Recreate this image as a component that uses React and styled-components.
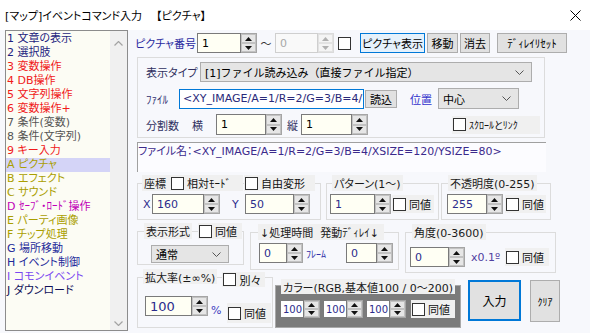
import React from 'react';
import styled, { createGlobalStyle } from 'styled-components';

const FONT = `"DejaVu Sans", "Noto Sans CJK JP", sans-serif`;

const Global = createGlobalStyle`
  html, body { margin: 0; padding: 0; background: #f7f8fc; }
  body { font-family: ${FONT}; font-size: 11px; font-feature-settings: "palt"; color: #111; }
  * { box-sizing: border-box; }
`;

const Root = styled.div`
  width: 590px; height: 333px; display: flex; flex-direction: column;
  background: #f7f8fc; overflow: hidden;
`;
const TitleBar = styled.div`
  height: 30px; flex: none; display: flex; align-items: center; justify-content: space-between;
  padding: 0 9px 0 5px; background: #ffffff; color: #000; font-size: 11px; white-space: pre;
`;
const Main = styled.div`display: flex; flex: 1; padding-left: 5px;`;

const ListBox = styled.div`
  width: 123px; height: 301px; flex: none; border: 1px solid #8c8c8c; background: #fcfcf4; display: flex;
`;
const ListItems = styled.div`flex: 1; padding-top: 1px;`;
const ListItem = styled.div`
  height: 14px; line-height: 14px; padding-left: 1px; white-space: nowrap; font-size: 11px;
  color: ${p => p.$color}; background: ${p => (p.$sel ? '#d4d4f7' : 'transparent')};
`;
const ScrollBar = styled.div`
  width: 17px; background: #f0f0f0; display: flex; flex-direction: column; justify-content: space-between;
  align-items: center; padding: 10px 0 4px;
`;

const Right = styled.div`margin-left: 7px; display: flex; flex-direction: column; width: 455px;`;

const Row = styled.div`
  display: flex; align-items: ${p => p.$align || 'center'}; flex: none;
  height: ${p => (p.$h ? p.$h + 'px' : 'auto')};
  margin-top: ${p => p.$mt || 0}px; margin-left: ${p => p.$ml || 0}px;
  padding-left: ${p => p.$pl || 0}px;
`;

const Label = styled.span`
  display: flex; align-items: center; flex: none; white-space: nowrap;
  width: ${p => (p.$w ? p.$w + 'px' : 'auto')}; height: ${p => p.$h || 20}px;
  margin-left: ${p => p.$ml || 0}px; margin-top: ${p => p.$mt || 0}px;
  justify-content: ${p => (p.$center ? 'center' : 'flex-start')};
  color: ${p => p.$color || '#1a1a1a'}; font-size: ${p => p.$fs || 11}px;
`;

const SpinWrap = styled.div`
  display: flex; flex: none; height: ${p => p.$h}px; margin-left: ${p => p.$ml || 0}px;
`;
const Edit = styled.div`
  width: ${p => p.$w}px; height: 100%; display: flex; align-items: center; padding-left: ${p => p.$pad}px;
  border: 1px solid ${p => (p.$dis ? '#cfcfcf' : '#7a7a7a')};
  background: ${p => p.$bg}; color: ${p => p.$color}; font-size: ${p => p.$fs}px; white-space: nowrap;
`;
const SpinBtns = styled.div`
  width: 16px; height: 100%; display: flex; flex-direction: column; border: 1px solid ${p => (p.$dis ? '#dadada' : '#a5a5a5')};
  border-left: none; background: #f0f0f0;
`;
const SpinHalf = styled.div`
  flex: 1; display: flex; align-items: center; justify-content: center;
  border: 1px solid ${p => (p.$dis ? '#e2e2e2' : '#c2c2c2')}; background: ${p => (p.$dis ? '#f4f4f4' : '#e6e6e6')};
`;

const Tri = ({ up, dis }) => (
  <svg width="7" height="4" viewBox="0 0 7 4">
    <polygon points={up ? '0,4 3.5,0 7,4' : '0,0 7,0 3.5,4'} fill={dis ? '#b0b0b0' : '#111'} />
  </svg>
);

const Spin = ({ w, h = 20, value, color = '#2c2c8c', bg = '#fffff4', fs = 11, pad = 4, disabled, ml }) => (
  <SpinWrap $h={h} $ml={ml}>
    <Edit $w={w} $pad={pad} $bg={disabled ? '#f9f9f9' : bg} $color={disabled ? '#a8a8a8' : color} $fs={fs} $dis={disabled}>
      {value}
    </Edit>
    <SpinBtns $dis={disabled}>
      <SpinHalf $dis={disabled}><Tri up dis={disabled} /></SpinHalf>
      <SpinHalf $dis={disabled}><Tri dis={disabled} /></SpinHalf>
    </SpinBtns>
  </SpinWrap>
);

const Button = styled.div`
  display: flex; align-items: center; justify-content: center; flex: none; white-space: nowrap;
  width: ${p => p.$w}px; height: ${p => p.$h || 20}px;
  margin-left: ${p => p.$ml || 0}px; margin-top: ${p => p.$mt || 0}px;
  border: ${p => (p.$thick ? 2 : 1)}px solid ${p => (p.$blue ? '#0078d7' : '#adadad')};
  background: ${p => (p.$light ? '#e5f1fb' : '#e1e1e1')};
  color: #000; font-size: ${p => p.$fs || 11}px;
`;

const Box = styled.span`
  width: 13px; height: 13px; flex: none; border: 1px solid #333; background: #fff;
  margin-left: ${p => p.$ml || 0}px;
`;
const CheckItem = styled.div`
  display: flex; align-items: center; gap: 3px; flex: none; white-space: nowrap;
  width: ${p => p.$w}px; height: ${p => p.$h || 18}px; padding-left: 1px;
  margin-left: ${p => p.$ml || 0}px; margin-top: ${p => p.$mt || 0}px;
  background: #f0f0f0; color: #111; font-size: ${p => p.$fs || 11}px;
`;
const Check = ({ children, ...rest }) => (
  <CheckItem {...rest}><Box />{children}</CheckItem>
);

const SelectBox = styled.div`
  display: flex; align-items: center; justify-content: space-between; flex: none;
  width: ${p => p.$w}px; height: ${p => p.$h || 20}px; margin-left: ${p => p.$ml || 0}px;
  border: 1px solid #adadad; background: #e5e5e5; padding: 0 7px 0 4px; color: #000; white-space: nowrap;
  font-feature-settings: normal;
`;
const Chevron = () => (
  <svg width="9" height="5" viewBox="0 0 9 5">
    <polyline points="0.5,0.5 4.5,4.5 8.5,0.5" fill="none" stroke="#555" strokeWidth="1" />
  </svg>
);
const Select = ({ children, ...rest }) => (
  <SelectBox {...rest}><span>{children}</span><Chevron /></SelectBox>
);

const DisplayGroup = styled.div`
  width: 408px; height: 81px; margin: 4px 0 0 2px; flex: none;
  border: 1px solid #dcdcdc; padding: 4px 0 0 8px;
`;
const FileInput = styled.div`
  width: 185px; height: 20px; flex: none; border: 1px solid #0078d7; background: #fff;
  display: flex; align-items: center; padding-left: 3px; white-space: nowrap; color: #2a2a7a;
`;
const FileNameBox = styled.div`
  width: 409px; height: 30px; margin: 4px 0 0 2px; flex: none;
  border-top: 1px solid #a0a0a0; border-left: 1px solid #a0a0a0;
  background: #fcfcff; color: #3b2a8c; padding: 1px 0 0 0; white-space: nowrap; line-height: 16px;
`;

const Group = styled.div`
  display: flex; flex-direction: column; flex: none;
  width: ${p => p.$w}px; height: ${p => p.$h}px;
  margin-left: ${p => p.$ml || 0}px; margin-top: ${p => p.$mt || 0}px;
  border: 1px solid ${p => p.$dark ? '#a9a9a9' : '#dcdcdc'};
  background: ${p => (p.$dark ? '#7b7b7b' : 'transparent')};
`;
const GroupHead = styled.div`
  display: flex; align-items: flex-start; height: ${p => p.$h || 16}px; flex: none;
  margin-top: ${p => p.$mt ?? -9}px; margin-left: ${p => p.$ml || 0}px;
`;
const HeadLabel = styled.div`
  display: flex; align-items: center; flex: none; white-space: nowrap;
  height: ${p => p.$h || 16}px; width: ${p => (p.$w ? p.$w + 'px' : 'auto')};
  padding: 0 2px; background: #f0f0f0; color: #1a1a1a; font-size: 11px;
`;

const TitleText = styled.span`color: #000;`;
const CloseIcon = () => (
  <svg width="11" height="11" viewBox="0 0 11 11">
    <path d="M0.5 0.5 L10.5 10.5 M10.5 0.5 L0.5 10.5" stroke="#000" strokeWidth="1" />
  </svg>
);
const ScrollArrow = ({ up }) => (
  <svg width="9" height="5" viewBox="0 0 9 5">
    <polyline points={up ? '0.5,4.5 4.5,0.5 8.5,4.5' : '0.5,0.5 4.5,4.5 8.5,0.5'} fill="none" stroke="#a3a3a3" strokeWidth="1.2" />
  </svg>
);

const LIST = [
  ['1 文章の表示', '#1e1e80'],
  ['2 選択肢', '#1e1e80'],
  ['3 変数操作', '#f01a1a'],
  ['4 DB操作', '#f01a1a'],
  ['5 文字列操作', '#f01a1a'],
  ['6 変数操作+', '#f01a1a'],
  ['7 条件(変数)', '#555555'],
  ['8 条件(文字列)', '#555555'],
  ['9 キー入力', '#f01a1a'],
  ['A ピクチャ', '#aa9e00', true],
  ['B エフェクト', '#aa9e00'],
  ['C サウンド', '#aa9e00'],
  ['D ｾｰﾌﾞ・ﾛｰﾄﾞ操作', '#c000b8'],
  ['E パーティ画像', '#aa9e00'],
  ['F チップ処理', '#aa9e00'],
  ['G 場所移動', '#1e2a9a'],
  ['H イベント制御', '#1e2a9a'],
  ['I コモンイベント', '#7a48f0'],
  ['J ダウンロード', '#101058'],
];

const NAVY = '#2c2c8c';

export default function App() {
  return (
    <Root>
      <Global />
      <TitleBar>
        <TitleText>[マップ]イベントコマンド入力    【ピクチャ】</TitleText>
        <CloseIcon />
      </TitleBar>
      <Main>
        <ListBox>
          <ListItems>
            {LIST.map(([t, c, s]) => (
              <ListItem key={t} $color={c} $sel={s}>{t}</ListItem>
            ))}
          </ListItems>
          <ScrollBar>
            <ScrollArrow up />
            <ScrollArrow />
          </ScrollBar>
        </ListBox>

        <Right>
          <Row $h={20} $mt={3}>
            <Label $w={62} $color="#2a2aa0">ピクチャ番号</Label>
            <Spin w={44} value="1" color="#000" />
            <Label $w={18} $center $color="#333">～</Label>
            <Spin w={43} value="0" disabled />
            <Box $ml={4} />
            <Button $w={65} $ml={9} $blue $light>ピクチャ表示</Button>
            <Button $w={31} $ml={2}>移動</Button>
            <Button $w={30} $ml={2}>消去</Button>
            <Button $w={70} $ml={7}>ﾃﾞｨﾚｲﾘｾｯﾄ</Button>
          </Row>

          <DisplayGroup>
            <Row $h={20}>
              <Label $w={54} $color="#303060">表示タイプ</Label>
              <Select $w={332}>[1]ファイル読み込み（直接ファイル指定）</Select>
            </Row>
            <Row $h={21} $mt={6}>
              <Label $w={33} $color="#303070">ﾌｧｲﾙ</Label>
              <FileInput>&lt;XY_IMAGE/A=1/R=2/G=3/B=4/</FileInput>
              <Button $w={32} $h={18} $ml={1}>読込</Button>
              <Label $w={28} $ml={13} $color="#3333cc">位置</Label>
              <Select $w={81} $h={21}>中心</Select>
            </Row>
            <Row $h={21} $mt={5}>
              <Label $w={46} $color="#303060">分割数</Label>
              <Label $w={24} $color="#303060">横</Label>
              <Spin w={50} h={21} value="1" color="#000" />
              <Label $w={14} $ml={5} $color="#303060">縦</Label>
              <Spin w={51} h={21} value="1" color="#000" />
              <Check $w={88} $ml={84} $fs={10}>ｽｸﾛｰﾙとﾘﾝｸ</Check>
            </Row>
          </DisplayGroup>

          <FileNameBox>ファイル名：&lt;XY_IMAGE/A=1/R=2/G=3/B=4/XSIZE=120/YSIZE=80&gt;</FileNameBox>

          <Row $align="flex-start" $mt={11} $ml={2}>
            <Group $w={184} $h={37}>
              <GroupHead $ml={4}>
                <HeadLabel $w={28}>座標</HeadLabel>
                <Check $w={73} $h={16}>相対ﾓｰﾄﾞ</Check>
                <Check $w={71} $h={16} $ml={1}>自由変形</Check>
              </GroupHead>
              <Row $h={20} $mt={3} $pl={5}>
                <Label $w={9} $color={NAVY}>X</Label>
                <Spin w={52} value="160" />
                <Label $w={13} $ml={12} $color={NAVY}>Y</Label>
                <Spin w={49} value="50" />
              </Row>
            </Group>
            <Group $w={113} $h={37} $ml={5}>
              <GroupHead $ml={5}>
                <HeadLabel>パターン(1～)</HeadLabel>
              </GroupHead>
              <Row $h={20} $mt={3} $pl={3}>
                <Spin w={45} value="1" />
                <Check $w={42} $ml={1}>同値</Check>
              </Row>
            </Group>
            <Group $w={110} $h={37} $ml={2}>
              <GroupHead $ml={6}>
                <HeadLabel>不透明度(0-255)</HeadLabel>
              </GroupHead>
              <Row $h={20} $mt={3} $pl={5}>
                <Spin w={40} value="255" />
                <Check $w={41} $ml={2}>同値</Check>
              </Row>
            </Group>
          </Row>

          <Row $align="flex-start" $mt={11} $ml={2}>
            <Group $w={107} $h={34}>
              <GroupHead $ml={6}>
                <HeadLabel $w={48}>表示形式</HeadLabel>
                <Check $w={44} $h={16} $ml={6}>同値</Check>
              </GroupHead>
              <Row $h={18} $mt={6} $pl={13}>
                <Select $w={78} $h={18}>通常</Select>
              </Row>
            </Group>
            <Group $w={149} $h={38} $ml={6} $mt={1}>
              <GroupHead $ml={7}>
                <HeadLabel $w={126}>↓処理時間&nbsp;&nbsp;発動ﾃﾞｨﾚｲ↓</HeadLabel>
              </GroupHead>
              <Row $h={20} $mt={3} $pl={8}>
                <Spin w={28} value="0" />
                <Label $w={40} $ml={3} $color="#3030a8" $fs={10}>ﾌﾚｰﾑ</Label>
                <Spin w={31} value="0" />
              </Row>
            </Group>
            <Group $w={151} $h={41} $ml={6} $mt={1}>
              <GroupHead $ml={6}>
                <HeadLabel>角度(0-3600)</HeadLabel>
              </GroupHead>
              <Row $h={20} $mt={7} $pl={4}>
                <Spin w={39} value="0" />
                <Label $w={34} $ml={6} $color="#5040a0">x0.1º</Label>
                <Check $w={44}>同値</Check>
              </Row>
            </Group>
          </Row>

          <Row $align="flex-start" $mt={4}>
            <Group $w={136} $h={51} $ml={2}>
              <GroupHead $ml={5}>
                <HeadLabel $h={15}>拡大率(±∞%)</HeadLabel>
                <Check $w={43} $h={15} $ml={5} $mt={3}>別々</Check>
              </GroupHead>
              <Row $align="flex-start" $mt={11} $pl={7}>
                <Spin w={47} value="100" fs={13} />
                <Label $w={16} $ml={3} $mt={4} $color="#4040c0">%</Label>
                <Check $w={44} $h={20} $mt={7}>同値</Check>
              </Row>
            </Group>
            <Group $w={186} $h={43} $ml={2} $mt={8} $dark>
              <GroupHead $ml={5} $mt={-7} $h={15}>
                <HeadLabel $w={174} $h={15}>カラー(RGB,基本値100 / 0～200)</HeadLabel>
              </GroupHead>
              <Row $h={18} $mt={6} $pl={4}>
                <Spin w={24} h={18} value="100" bg="#fff" fs={10} pad={2} />
                <Spin w={24} h={18} value="100" bg="#fff" fs={10} pad={2} ml={3} />
                <Spin w={24} h={18} value="100" bg="#fff" fs={10} pad={2} ml={3} />
                <Check $w={44} $ml={5}>同値</Check>
              </Row>
            </Group>
            <Button $w={53} $h={41} $ml={7} $mt={3} $blue $thick $fs={12}>入力</Button>
            <Button $w={30} $h={42} $ml={9} $mt={3} $fs={10}>ｸﾘｱ</Button>
          </Row>
        </Right>
      </Main>
    </Root>
  );
}
